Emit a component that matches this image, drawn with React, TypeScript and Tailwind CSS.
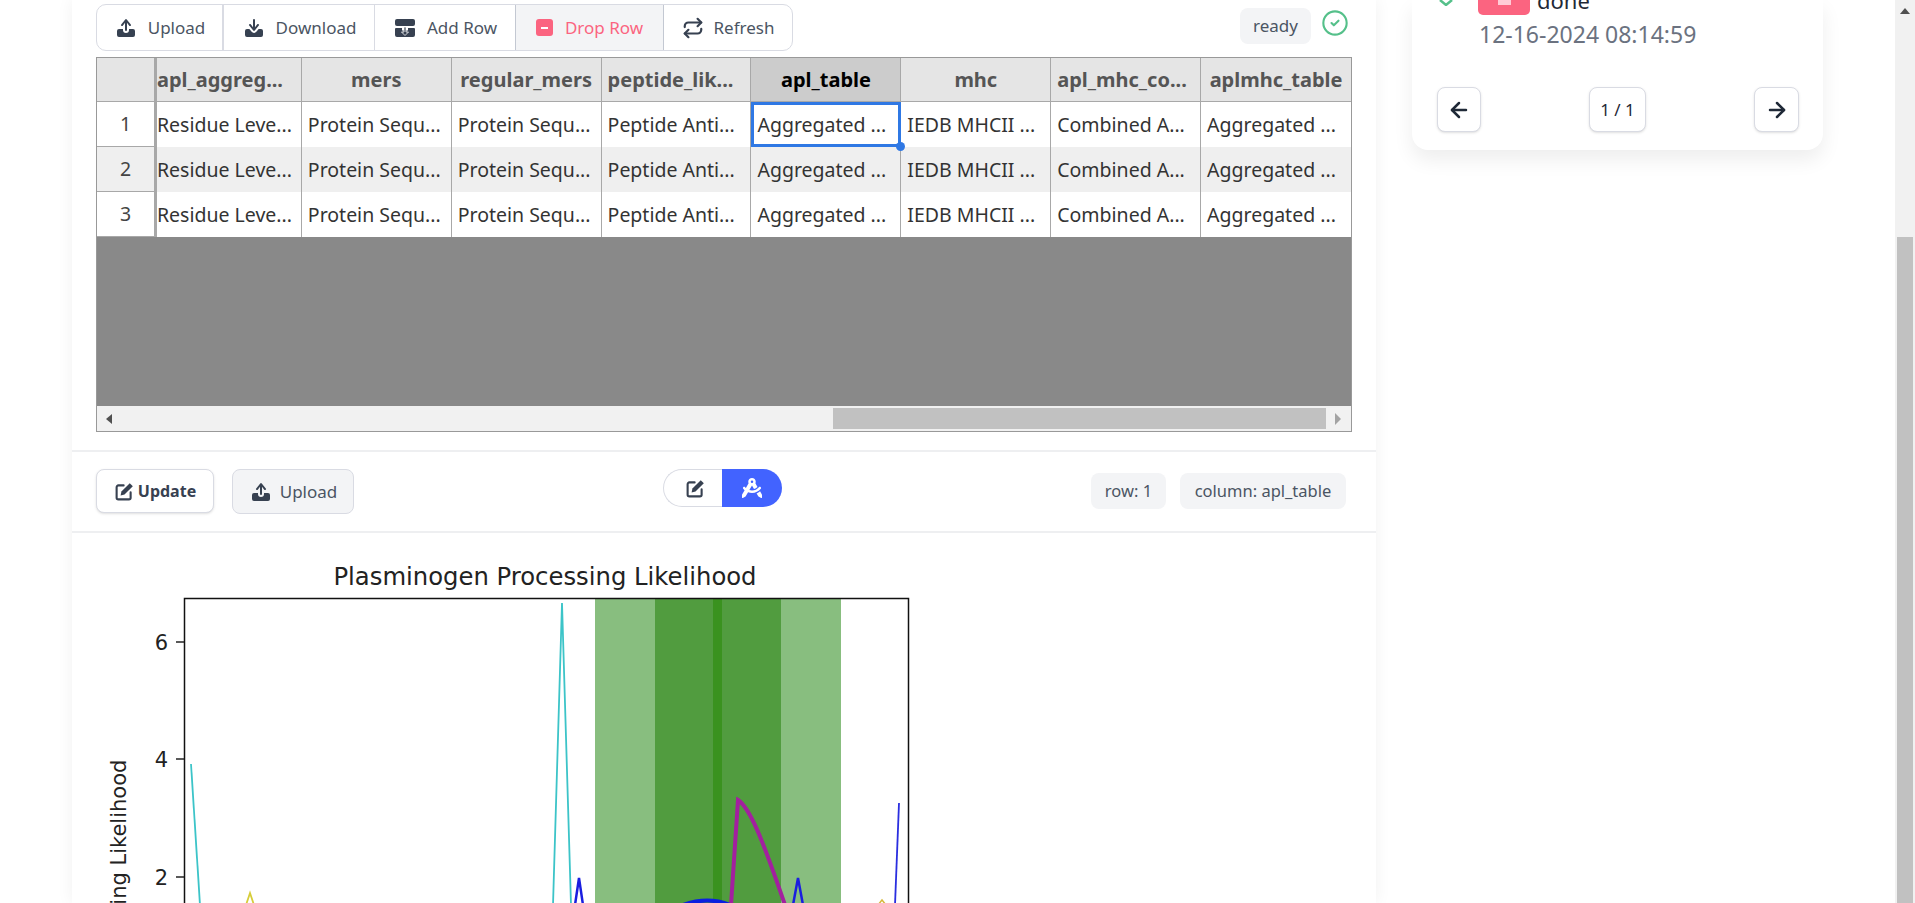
import { ArrowLeft, ArrowRight, CircleCheck, Repeat } from "lucide-react";
import { FaCompassDrafting } from "react-icons/fa6";

const UploadIcon = ({ className }: { className?: string }) => (
  <svg viewBox="0 0 24 24" fill="currentColor" className={className}>
    <path d="M12 3a1 1 0 0 1 .78.375l4 5a1 1 0 1 1-1.56 1.25L13 6.85V14a1 1 0 1 1-2 0V6.85L8.78 9.626a1 1 0 1 1-1.56-1.25l4-5A1 1 0 0 1 12 3ZM9 14v-1H5a2 2 0 0 0-2 2v4a2 2 0 0 0 2 2h14a2 2 0 0 0 2-2v-4a2 2 0 0 0-2-2h-4v1a3 3 0 1 1-6 0Zm8 2a1 1 0 1 0 0 2h.01a1 1 0 1 0 0-2H17Z" />
  </svg>
);

const DownloadIcon = ({ className }: { className?: string }) => (
  <svg viewBox="0 0 24 24" fill="currentColor" className={className}>
    <path d="M13 11.15V4a1 1 0 1 0-2 0v7.15L8.78 8.374a1 1 0 1 0-1.56 1.25l4 5a1 1 0 0 0 1.56 0l4-5a1 1 0 1 0-1.56-1.25L13 11.15Z" />
    <path d="M9.657 15.874 7.358 13H5a2 2 0 0 0-2 2v4a2 2 0 0 0 2 2h14a2 2 0 0 0 2-2v-4a2 2 0 0 0-2-2h-2.358l-2.3 2.874a3 3 0 0 1-4.685 0ZM17 16a1 1 0 1 0 0 2h.01a1 1 0 1 0 0-2H17Z" />
  </svg>
);

const AddRowIcon = ({ className }: { className?: string }) => (
  <svg viewBox="0 0 24 24" fill="currentColor" className={className}>
    <path d="M4 3h16a2 2 0 0 1 2 2v3a2 2 0 0 1-2 2H4a2 2 0 0 1-2-2V5a2 2 0 0 1 2-2Z" />
    <path d="M3 12h6v2.5h6V12h6a1 1 0 0 1 1 1v6a2 2 0 0 1-2 2H4a2 2 0 0 1-2-2v-6a1 1 0 0 1 1-1Z" />
    <path d="M11 11h2v5h2.5L12 19.5 8.500 16H11Z" stroke="#fff" strokeWidth="0.8" />
  </svg>
);

const EditIcon = ({ className }: { className?: string }) => (
  <svg viewBox="0 0 24 24" className={className}>
    <path d="M11 5H5a2 2 0 0 0-2 2v12a2 2 0 0 0 2 2h12a2 2 0 0 0 2-2v-6" fill="none" stroke="currentColor" strokeWidth="2.4" strokeLinecap="round" />
    <path d="M18 2.500 21.500 6 12 15.500l-4.500 1 1-4.500Z" fill="currentColor" />
  </svg>
);

const columns = [
  "apl_aggreg...",
  "mers",
  "regular_mers",
  "peptide_lik...",
  "apl_table",
  "mhc",
  "apl_mhc_co...",
  "aplmhc_table",
];

const cells = [
  "Residue Leve...",
  "Protein Sequ...",
  "Protein Sequ...",
  "Peptide Anti...",
  "Aggregated ...",
  "IEDB MHCII ...",
  "Combined A...",
  "Aggregated ...",
];

const widths = ["w-[145px]", "w-[150px]", "w-[150px]", "w-[150px]", "w-[150px]", "w-[150px]", "w-[150px]", "w-[150px]"];

// header alignment: cut-off names sit against the left edge, the rest are centred
const headerAligns = [
  "justify-start",
  "justify-center",
  "justify-center",
  "justify-start pl-[6px]",
  "justify-center",
  "justify-center",
  "justify-start pl-[6px]",
  "justify-center",
];

function Toolbar() {
  const itemClass = "flex items-center justify-center gap-[10px] h-full text-[#4b5563]";
  return (
    <div className="flex h-[47px] w-[697px] rounded-[10px] border border-[#d9dbe3] bg-white text-[17px]">
      <div className={`${itemClass} w-[127px] border-r-2 border-[#d9dbe3]`}>
        <UploadIcon className="w-6 h-6 text-[#374151]" />
        <span>Upload</span>
      </div>
      <div className={`${itemClass} w-[151px] border-r border-[#d9dbe3]`}>
        <DownloadIcon className="w-6 h-6 text-[#374151]" />
        <span>Download</span>
      </div>
      <div className={`${itemClass} w-[140px]`}>
        <AddRowIcon className="w-6 h-6 text-[#374151]" />
        <span>Add Row</span>
      </div>
      <div className="flex items-center justify-center gap-[12px] h-full w-[149px] border-x border-[#c3c8d2] bg-[#f3f4f6] text-[#fb6480]">
        <div className="flex items-center justify-center w-[17px] h-[17px] rounded-[3px] bg-[#fb6480]">
          <div className="w-[7px] h-[2px] bg-white" />
        </div>
        <span>Drop Row</span>
      </div>
      <div className={`${itemClass} flex-1`}>
        <Repeat className="w-[22px] h-[22px] text-[#374151]" strokeWidth={2.4} />
        <span>Refresh</span>
      </div>
    </div>
  );
}

function DataTable() {
  return (
    <div className="mt-[6px] h-[375px] w-[1256px] border border-[#999999] flex flex-col text-[19.5px] text-[#333333]">
      <div className="flex h-[44px] shrink-0 bg-[#e5e5e5] border-b border-[#a8a8a8] font-bold text-[20px] text-[#555555]">
        <div className="w-[60px] border-r-[3px] border-[#a8a8a8]" />
        {columns.map((col, i) => (
          <div
            key={col}
            className={`${widths[i]} ${headerAligns[i]} ${i === 4 ? "bg-[#cccccc] text-black" : ""} ${i === 7 ? "border-r-0" : "border-r"} border-[#a8a8a8] flex items-center whitespace-nowrap overflow-hidden`}
          >
            {col}
          </div>
        ))}
      </div>

      {[1, 2, 3].map((row) => (
        <div key={row} className={`relative flex h-[45px] shrink-0 ${row === 1 ? "z-10" : ""} ${row === 2 ? "bg-[#efefef]" : "bg-white"}`}>
          <div className="w-[60px] border-r-[3px] border-b border-[#a8a8a8] flex items-center justify-center text-[#444444]">
            {row}
          </div>
          {cells.map((text, i) => (
            <div
              key={i}
              className={`${widths[i]} ${i === 7 ? "border-r-0" : "border-r"} ${i === 0 ? "pl-0" : "pl-[6px]"} border-[#a8a8a8] flex items-center whitespace-nowrap overflow-hidden`}
            >
              {text}
            </div>
          ))}
          {row === 1 && (
            <>
              <div className="absolute left-[654px] top-0 w-[150px] h-[45px] border-[3px] border-[#2f78e4]" />
              <div className="absolute left-[799px] top-[40px] w-[9px] h-[9px] rounded-full bg-[#2f78e4]" />
            </>
          )}
        </div>
      ))}

      <div className="flex-1 bg-[#898989]" />

      <div className="flex items-center h-[25px] shrink-0 bg-[#f1f1f1]">
        <div className="ml-[9px] w-0 h-0 border-y-[5px] border-y-transparent border-r-[6px] border-r-[#505050]" />
        <div className="ml-[721px] w-[493px] h-[21px] bg-[#c1c1c1]" />
        <div className="ml-[9px] w-0 h-0 border-y-[6px] border-y-transparent border-l-[6px] border-l-[#a3a3a3]" />
      </div>
    </div>
  );
}

function ActionBar() {
  return (
    <div className="mt-[18px] h-[83px] border-y-2 border-[#eeeff1] px-6 flex items-start">
      <div className="mt-[17px] flex items-center h-[44px] w-[118px] justify-center gap-[3px] rounded-[8px] border border-[#d9dbe3] bg-white shadow-sm font-bold text-[16px] text-[#374151]">
        <EditIcon className="w-[21px] h-[21px]" />
        <span>Update</span>
      </div>
      <div className="mt-[17px] ml-[18px] flex items-center h-[45px] w-[122px] justify-center gap-[7px] rounded-[8px] border border-[#d9dbe3] bg-[#f3f4f6] text-[17px] text-[#4b5563]">
        <UploadIcon className="w-6 h-6 text-[#374151]" />
        <span>Upload</span>
      </div>
      <div className="mt-[17px] ml-[309px] flex h-[38px] w-[119px]">
        <div className="flex items-center justify-center pl-[4px] w-[59px] rounded-l-full border border-r-0 border-[#d9dbe3] bg-white text-[#374151]">
          <EditIcon className="w-[21px] h-[21px]" />
        </div>
        <div className="flex items-center justify-center w-[60px] rounded-r-full bg-[#4263ff] text-white">
          <FaCompassDrafting className="w-[20px] h-[20px]" />
        </div>
      </div>
      <div className="mt-[21px] ml-[309px] flex items-center gap-[14px] text-[16.5px] text-[#4b5563]">
        <div className="flex items-center justify-center h-[36px] w-[75px] rounded-[8px] bg-[#f3f4f6]">row: 1</div>
        <div className="flex items-center justify-center h-[36px] w-[166px] rounded-[8px] bg-[#f3f4f6] whitespace-nowrap">column: apl_table</div>
      </div>
    </div>
  );
}

function ChartImage() {
  return (
    <svg viewBox="96 533 840 370" className="ml-6 w-[840px] h-[370px] block font-['DejaVu_Sans',sans-serif]">
      <text x="545" y="585" textAnchor="middle" fontSize="24.3" fill="#222222">Plasminogen Processing Likelihood</text>

      <rect x="595" y="598" width="246" height="320" fill="#88be7f" />
      <rect x="655" y="598" width="126" height="320" fill="#519c3f" />
      <rect x="713" y="598" width="9" height="320" fill="#3a921f" />
      <rect x="184.500" y="598.500" width="724" height="340" fill="none" stroke="#111111" strokeWidth="1.500" />

      {[
        [642, "6"],
        [759, "4"],
        [877, "2"],
      ].map(([y, label]) => (
        <g key={label}>
          <line x1="176" x2="184" y1={y} y2={y} stroke="#222222" strokeWidth="1.500" />
          <text x="168" y={Number(y) + 8} textAnchor="end" fontSize="21" fill="#222222">{label}</text>
        </g>
      ))}

      <text transform="translate(126 872) rotate(-90)" textAnchor="middle" fontSize="21" fill="#222222">Processing Likelihood</text>

      <polyline points="191,764 200,905" fill="none" stroke="#3cc4c8" strokeWidth="1.800" />
      <polyline points="553,905 562,603 571,905" fill="none" stroke="#3cc4c8" strokeWidth="1.800" />
      <polyline points="575,905 579,878 583,905" fill="none" stroke="#1a1ee0" strokeWidth="2.500" />
      <polyline points="793,905 798,878 803,905" fill="none" stroke="#1a1ee0" strokeWidth="2.500" />
      <polyline points="895,905 899,803" fill="none" stroke="#2a2ee0" strokeWidth="1.800" />
      <path d="M731 905 738 800C750 808 762 838 785 905" fill="none" stroke="#a3209f" strokeWidth="4" />
      <path d="M683 905C700 899 715 899 730 905" fill="none" stroke="#0a1fe0" strokeWidth="4" />
      <polyline points="246,905 250,893 254,905" fill="none" stroke="#d6cd3a" strokeWidth="1.800" />
      <polyline points="878,905 882,900 886,905" fill="none" stroke="#d6b83a" strokeWidth="1.500" />
    </svg>
  );
}

function StatusCard() {
  return (
    <div className="ml-[36px] w-[411px] h-[150px] rounded-b-[16px] bg-white shadow-[0_10px_20px_rgba(0,0,0,0.07)] overflow-hidden relative">
      <div className="flex items-start h-[15px]">
        <svg viewBox="0 0 14 6" className="ml-[27px] w-[14px] h-[6px] shrink-0">
          <polyline points="1,0 7,5 13,0" fill="none" stroke="#55c08a" strokeWidth="2.500" />
        </svg>
        <div className="ml-[25px] relative w-[52px] h-[15px] rounded-b-[5px] bg-[#fb6480]">
          <div className="absolute left-[20px] top-0 w-[13px] h-[5px] bg-[#ffcbd6]" />
        </div>
        <div className="ml-[7px] -mt-[7px] text-[22px] leading-[14px] text-[#1f2937]">done</div>
      </div>
      <div className="ml-[67px] mt-[5px] text-[23px] leading-7 text-[#6b7280] whitespace-nowrap">12-16-2024 08:14:59</div>
      <div className="mt-[39px] pl-[25px] pr-[24px] flex justify-between items-center text-[#1f2937]">
        <div className="flex items-center justify-center w-[44px] h-[45px] rounded-[8px] border border-[#d9dbe3] shadow-sm bg-white">
          <ArrowLeft className="w-6 h-6" strokeWidth={2.5} />
        </div>
        <div className="flex items-center justify-center w-[57px] h-[45px] rounded-[8px] border border-[#d9dbe3] shadow-sm bg-white text-[17px]">1 / 1</div>
        <div className="flex items-center justify-center w-[45px] h-[45px] rounded-[8px] border border-[#d9dbe3] shadow-sm bg-white">
          <ArrowRight className="w-6 h-6" strokeWidth={2.5} />
        </div>
      </div>
    </div>
  );
}

export default function App() {
  return (
    <div className="flex h-[903px] overflow-hidden bg-white font-['Noto_Sans',sans-serif]">
      <div className="flex flex-1 pl-[72px]">
        <div className="w-[1304px] bg-white shadow-[0_0_16px_rgba(0,0,0,0.06)]">
          <div className="px-6 pt-[4px]">
            <div className="flex justify-between">
              <Toolbar />
              <div className="flex items-start gap-[10px] mr-[3px] mt-[4px]">
                <div className="flex items-center justify-center w-[71px] h-[36px] rounded-[8px] bg-[#f3f4f6] text-[17px] text-[#4b5563]">ready</div>
                <CircleCheck className="mt-[1px] w-7 h-7 text-[#55c08a]" strokeWidth={1.8} />
              </div>
            </div>
            <DataTable />
          </div>
          <ActionBar />
          <ChartImage />
        </div>
        <StatusCard />
      </div>
      <div className="w-5 bg-[#f1f1f1] flex flex-col items-center">
        <div className="mt-[8px] w-0 h-0 border-x-[5px] border-x-transparent border-b-[6px] border-b-[#505050]" />
        <div className="mt-[223px] flex-1 w-4 bg-[#c1c1c1]" />
      </div>
    </div>
  );
}
